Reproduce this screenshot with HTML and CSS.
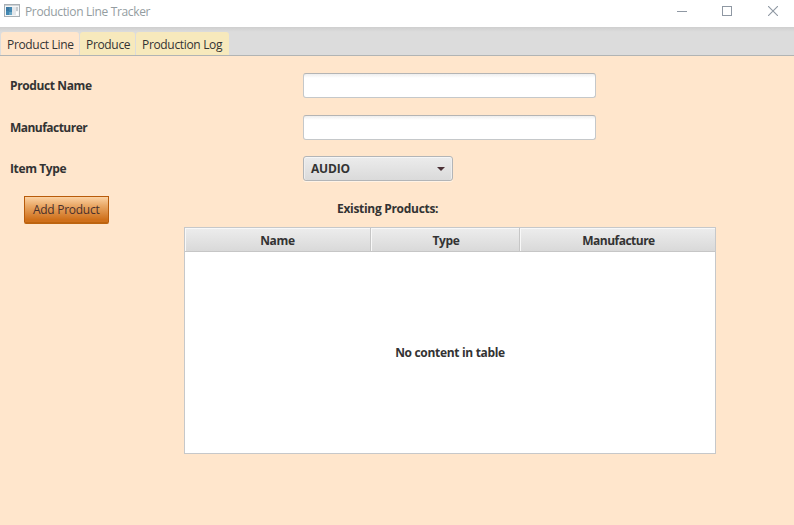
FILE: index.html
```html
<!DOCTYPE html>
<html lang="en">
<head>
<meta charset="utf-8">
<title>Production Line Tracker</title>
<link rel="stylesheet" href="styles.css">
</head>
<body>
<header class="titlebar">
  <svg class="app-icon" width="16" height="14" viewBox="0 0 16 14" shape-rendering="crispEdges">
    <rect x="0.5" y="0.5" width="15" height="12" fill="#f4f6f7" stroke="#a9b0b5"/>
    <rect x="1" y="1" width="14" height="1" fill="#cfd3d6"/>
    <rect x="2" y="3" width="6" height="8" fill="#4388b2"/>
    <rect x="2" y="3" width="3" height="4" fill="#3c78a2"/>
    <rect x="5" y="8" width="3" height="3" fill="#6ba8c5"/>
    <rect x="8" y="3" width="4" height="8" fill="#e3e7eb"/>
    <rect x="12" y="3" width="2" height="4" fill="#c5cbd0"/>
    <rect x="12" y="8" width="2" height="3" fill="#fff"/>
  </svg>
  <span class="title">Production Line Tracker</span>
  <div class="controls">
    <svg width="10" height="10" viewBox="0 0 10 10"><path d="M0 5.5H10" stroke="#8f98a3"/></svg>
    <svg width="10" height="10" viewBox="0 0 10 10"><rect x="0.5" y="0.5" width="9" height="9" fill="none" stroke="#8f98a3"/></svg>
    <svg width="10" height="10" viewBox="0 0 10 10"><path d="M0 0L10 10M10 0L0 10" stroke="#8f98a3" stroke-width="1.1"/></svg>
  </div>
</header>
<nav class="tabs">
  <div class="tab tab-line active"><span>Product Line</span></div>
  <div class="tab tab-produce"><span>Produce</span></div>
  <div class="tab tab-log"><span>Production Log</span></div>
</nav>
<main class="pane">
  <div class="form">
    <label class="label" for="name">Product Name</label>
    <input class="field" id="name" type="text">
    <label class="label label-maker" for="maker">Manufacturer</label>
    <input class="field" id="maker" type="text">
    <span class="label label-type">Item Type</span>
    <div class="combo"><span>AUDIO</span><svg width="8" height="4" viewBox="0 0 8 4"><path d="M0 0H8L4 4Z" fill="#4b3136"/></svg></div>
  </div>
  <div class="actions">
    <button class="add"><span>Add Product</span></button>
    <span class="caption">Existing Products:</span>
  </div>
  <section class="table">
    <div class="head">
      <div class="col col-name">Name</div>
      <div class="col col-type">Type</div>
      <div class="col col-maker">Manufacture</div>
    </div>
    <div class="empty">No content in table</div>
  </section>
</main>
</body>
</html>
```
FILE: styles.css
```css
* { box-sizing: border-box; }
body {
  margin: 0;
  height: 525px;
  overflow: hidden;
  display: flex;
  flex-direction: column;
  background: #ffe6cc;
  color: #333;
  font: 12px/16px "Open Sans", "Noto Sans", sans-serif;
}
.titlebar {
  height: 27px;
  flex: none;
  display: flex;
  align-items: flex-start;
  padding-left: 4px;
  background: #fff;
  color: #949da1;
}
.app-icon { margin-top: 4px; }
.title { margin: 4px 0 0 5px; white-space: nowrap; letter-spacing: -0.35px; }
.controls { display: flex; gap: 36px; margin: 6px 16px 0 auto; }
.controls svg { display: block; }
.controls svg:first-child { margin-right: -1px; }
.tabs {
  height: 29px;
  flex: none;
  display: flex;
  gap: 1px;
  padding: 5px 0 0 1px;
  border-bottom: 1px solid #b1b4b4;
  background: linear-gradient(#cfcfcf, #dcdcdc 5px);
}
.tab {
  height: 23px;
  padding: 5px 0 0 6px;
  border-radius: 3px 3px 0 0;
  background: #f7e9bc;
  white-space: nowrap;
  letter-spacing: -0.33px;
}
.active { background: #ffe6cc; }
.tab-line { width: 78px; }
.tab-produce { width: 55px; }
.tab-log { width: 93px; }
.pane { flex: 1; padding: 17px 0 0 10px; }
.form {
  display: grid;
  grid-template-columns: 293px 293px;
  grid-template-rows: 25px 25px 25px;
  row-gap: 17px;
  font-weight: 700;
}
.label { margin-top: 5px; letter-spacing: -0.38px; white-space: nowrap; }
.label-maker { letter-spacing: -0.53px; }
.field {
  width: 293px;
  height: 25px;
  border: 1px solid #c5c8ca;
  border-top-color: #b4b4b4;
  border-radius: 3px;
  background: linear-gradient(#eee, #fff 4px);
  outline: none;
}
.combo {
  width: 150px;
  height: 25px;
  margin-top: -1px;
  padding: 0 7px;
  display: flex;
  align-items: center;
  justify-content: space-between;
  border: 1px solid #b3b5b7;
  border-radius: 3px;
  background: linear-gradient(#ececec, #dadada);
  box-shadow: inset 0 1px #f6f6f6, inset 1px 0 #eee, inset -1px 0 #eee, 0 1px #fff3e6;
  letter-spacing: -0.2px;
}
.label-type { margin-top: 4px; }
.actions { display: flex; margin: 14px 0 0 14px; height: 31px; }
.add {
  width: 85px;
  height: 28px;
  padding: 0 0 0 8px;
  border: 1px solid #b85b0a;
  border-bottom: 2px solid #bd640f;
  border-radius: 0 0 2px 2px;
  background: linear-gradient(#fcd2a3, #e9a866 35%, #cf701b 90%);
  color: #4a302c;
  font: inherit;
  letter-spacing: -0.28px;
  text-align: left;
  white-space: nowrap;
}
.caption { margin: 5px 0 0 228px; font-weight: 700; letter-spacing: -0.3px; }
.table {
  width: 532px;
  height: 227px;
  margin-left: 174px;
  display: flex;
  flex-direction: column;
  border: 1px solid #c6c8ca;
  background: #fff;
  font-weight: 700;
  letter-spacing: -0.32px;
}
.head { display: flex; height: 24px; border-bottom: 1px solid #c6c6c6; }
.col {
  padding-top: 5px;
  border-right: 1px solid #c6c6c6;
  background: linear-gradient(#ededed, #d9d9d9);
  box-shadow: inset 1px 1px #f8f8f8;
  text-align: center;
  line-height: 16px;
}
.col-name { width: 186px; }
.col-type { width: 149px; padding-left: 2px; }
.col-maker { width: 195px; padding-left: 2px; border-right: 0; letter-spacing: -0.52px; }
.empty { flex: 1; display: grid; place-items: center; }
```
